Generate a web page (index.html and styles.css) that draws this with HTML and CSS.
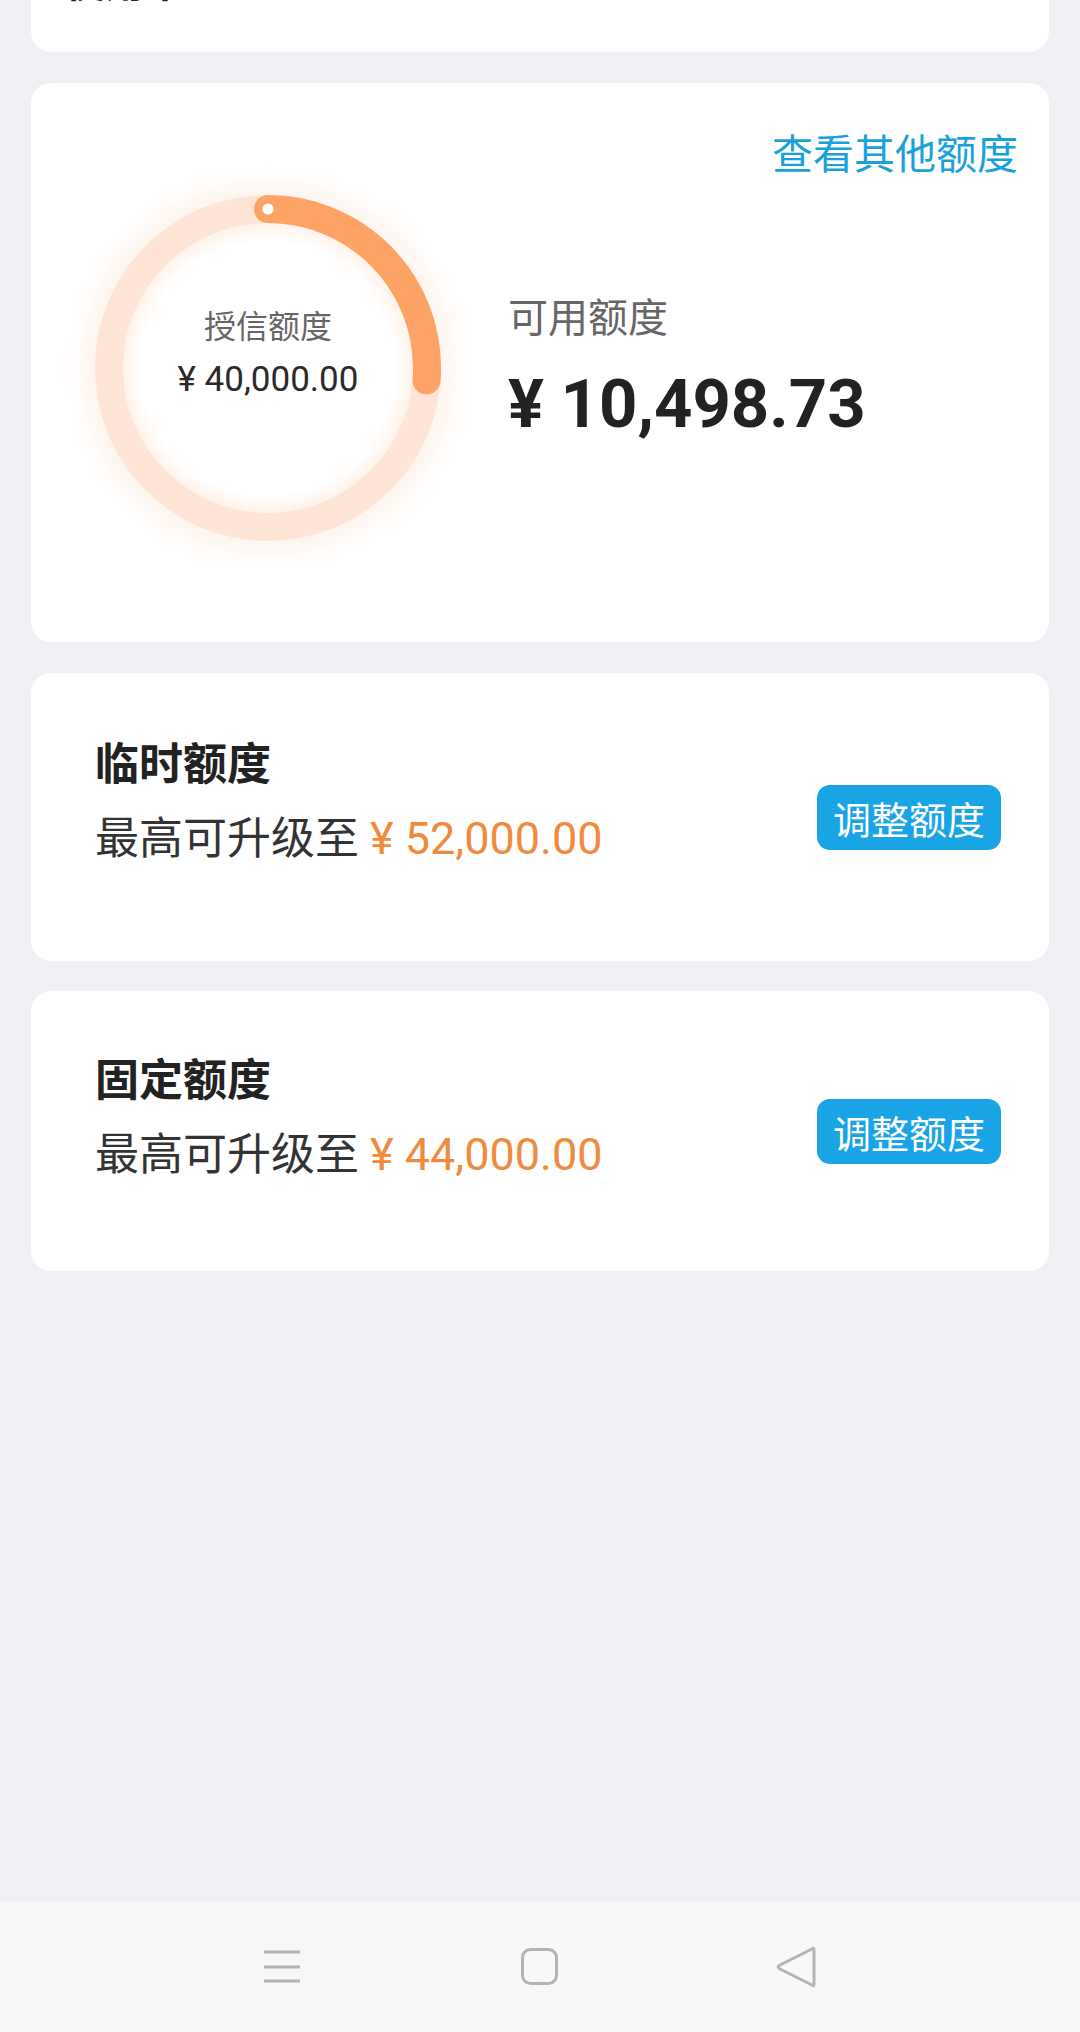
FILE: index.html
```html
<!DOCTYPE html>
<html lang="zh-CN">
<head>
<meta charset="utf-8">
<title>额度</title>
<link rel="stylesheet" href="styles.css">
</head>
<body>
<main class="page">
  <section class="card card-top">
    <div class="top-title">使用率</div>
  </section>

  <section class="card quota">
    <div class="quota-head"><a class="quota-link">查看其他额度</a></div>
    <div class="quota-body">
      <div class="ring">
        <svg class="ring-svg" viewBox="0 0 360 360" width="360" height="360">
          <defs>
            <filter id="glow" x="-20%" y="-20%" width="140%" height="140%">
              <feGaussianBlur stdDeviation="10"/>
            </filter>
            <radialGradient id="inner" cx="50%" cy="50%" r="50%">
              <stop offset="0.86" stop-color="#ffffff"/>
              <stop offset="1" stop-color="#fff3ea"/>
            </radialGradient>
          </defs>
          <circle cx="180" cy="180" r="162" fill="none" stroke="#fde6d4" stroke-width="52" opacity="0.4" filter="url(#glow)"/>
          <circle cx="180" cy="180" r="146" fill="url(#inner)"/>
          <circle cx="180" cy="180" r="159" fill="none" stroke="#fee5d6" stroke-width="28"/>
          <circle cx="180" cy="180" r="159" fill="none" stroke="#fda365" stroke-width="28" stroke-linecap="round" stroke-dasharray="262 1000" transform="rotate(-90 180 180)"/>
          <circle cx="180" cy="21" r="5.5" fill="#ffffff"/>
        </svg>
        <div class="ring-text">
          <div class="ring-label">授信额度</div>
          <div class="ring-amount">¥ 40,000.00</div>
        </div>
      </div>
      <div class="avail">
        <div class="avail-label">可用额度</div>
        <div class="avail-amount">¥ 10,498.73</div>
      </div>
    </div>
  </section>

  <section class="card limit">
    <div class="limit-text">
      <div class="limit-title">临时额度</div>
      <div class="limit-sub">最高可升级至 <span class="limit-amount">¥ 52,000.00</span></div>
    </div>
    <button class="adjust-btn">调整额度</button>
  </section>

  <section class="card limit limit-fixed">
    <div class="limit-text">
      <div class="limit-title">固定额度</div>
      <div class="limit-sub">最高可升级至 <span class="limit-amount">¥ 44,000.00</span></div>
    </div>
    <button class="adjust-btn">调整额度</button>
  </section>

  <nav class="navbar">
    <svg class="nav-icon" viewBox="0 0 60 60" width="60" height="60">
      <g stroke="#b4b4b4" stroke-width="3">
        <line x1="11" y1="15" x2="47" y2="15"/>
        <line x1="11" y1="30" x2="47" y2="30"/>
        <line x1="11" y1="44" x2="47" y2="44"/>
      </g>
    </svg>
    <svg class="nav-icon" viewBox="0 0 60 60" width="60" height="60">
      <rect x="12.5" y="12.5" width="34" height="34" rx="8" fill="none" stroke="#b4b4b4" stroke-width="3"/>
    </svg>
    <svg class="nav-icon" viewBox="0 0 60 60" width="60" height="60">
      <path d="M47 13 L47 47 Q47 50 45 48 L12 31.5 Q10.5 30 12 28.5 L45 12 Q47 10 47 13 Z" fill="none" stroke="#b4b4b4" stroke-width="3" stroke-linejoin="round"/>
    </svg>
  </nav>
</main>
</body>
</html>
```

FILE: styles.css
```css
* {
  box-sizing: border-box;
}

html, body {
  margin: 0;
  padding: 0;
}

body {
  background: #f0f0f5;
  font-family: "Roboto", "Noto Sans CJK SC", sans-serif;
  color: #222222;
  overflow: hidden;
}

.page {
  display: flex;
  flex-direction: column;
  height: 2032px;
  width: 1080px;
}

.card {
  background: #ffffff;
  border-radius: 20px;
  margin: 0 31px;
}

.card-top {
  margin-top: -38px;
  height: 90px;
  padding-left: 34px;
}

.top-title {
  font-size: 40px;
  line-height: 44px;
  font-weight: 700;
  color: #222222;
}

.quota {
  margin-top: 31px;
  padding: 44px 31px 94px 57px;
}

.quota-head {
  display: flex;
  justify-content: flex-end;
}

.quota-link {
  font-size: 41px;
  line-height: 56px;
  color: #1aa1dc;
  text-decoration: none;
}

.quota-body {
  margin-top: 5px;
  display: flex;
  align-items: center;
}

.ring {
  display: grid;
  width: 360px;
  height: 360px;
  flex: none;
}

.ring-svg {
  grid-area: 1 / 1;
  overflow: visible;
}

.ring-text {
  grid-area: 1 / 1;
  padding-top: 117px;
  text-align: center;
}

.ring-label {
  font-size: 32px;
  line-height: 44px;
  color: #666666;
}

.ring-amount {
  margin-top: 9px;
  font-size: 35px;
  line-height: 44px;
  color: #2a2a2a;
}

.avail {
  margin-left: 60px;
}

.avail-label {
  font-size: 40px;
  line-height: 52px;
  color: #666666;
}

.avail-amount {
  margin-top: 19px;
  font-size: 67px;
  line-height: 80px;
  font-weight: 700;
  color: #222222;
}

.limit {
  margin-top: 31px;
  display: flex;
  align-items: center;
  justify-content: space-between;
  padding: 0 48px 0 64px;
}

.limit-text {
  padding: 62px 0 92px;
}

.limit-fixed {
  margin-top: 30px;
}

.limit-fixed .limit-text {
  padding: 60px 0 86px;
}

.limit-title {
  font-size: 44px;
  line-height: 60px;
  font-weight: 700;
  color: #222222;
}

.limit-sub {
  margin-top: 14px;
  font-size: 44px;
  line-height: 60px;
  color: #333333;
}

.limit-amount {
  color: #f08a3c;
  font-size: 45px;
}

.adjust-btn {
  width: 184px;
  height: 65px;
  border: none;
  border-radius: 13px;
  background: #19a4e6;
  color: #ffffff;
  font-family: "Noto Sans CJK SC", sans-serif;
  font-size: 38px;
  line-height: 65px;
  padding: 0;
}

.navbar {
  margin-top: auto;
  height: 131px;
  background: #f8f8f8;
  display: flex;
  justify-content: center;
  align-items: center;
  gap: 197px;
}

.nav-icon {
  display: block;
}
```
